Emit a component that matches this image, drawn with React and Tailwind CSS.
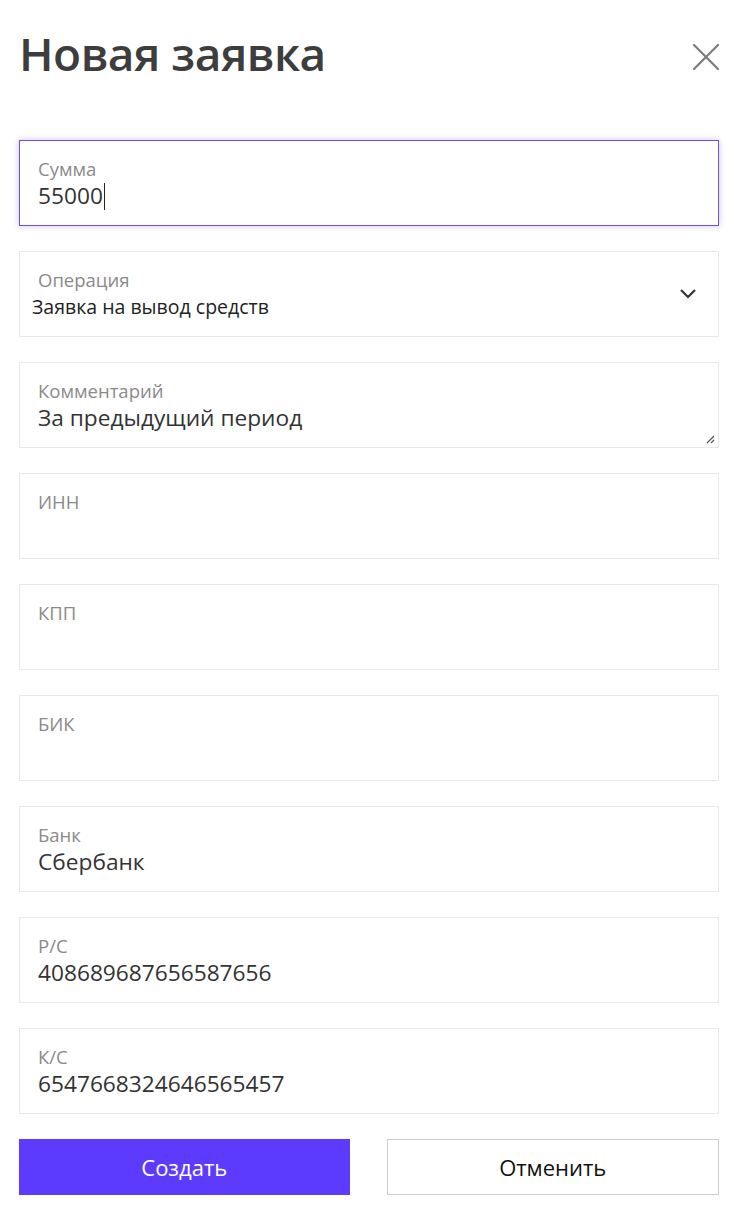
import React from 'react';

const fields = [
  { label: 'Комментарий', value: 'За предыдущий период', resize: true },
  { label: 'ИНН', value: '' },
  { label: 'КПП', value: '' },
  { label: 'БИК', value: '' },
  { label: 'Банк', value: 'Сбербанк' },
  { label: 'Р/С', value: '408689687656587656' },
  { label: 'К/С', value: '6547668324646565457' },
];

const Field = ({ label, value, resize }) => (
  <div className="relative h-[86px] w-full border border-[#e8e8e8] bg-white px-[18px] pt-[16px]">
    <div className="text-[18.5px] leading-[24px] text-[#8a8a8a]">{label}</div>
    <div className="text-[22.7px] leading-[30px] text-[#333333]">{value}</div>
    {resize && (
      <svg className="absolute bottom-[3px] right-[3px]" width="10" height="10" viewBox="0 0 10 10">
        <path d="M9 2 L2 9 M9 6 L6 9" stroke="#555" strokeWidth="1.2" />
      </svg>
    )}
  </div>
);

export default function App() {
  return (
    <div className="min-h-[1212px] w-[743px] bg-white pl-[19px] pr-[24px] pt-[22px]" style={{ fontFamily: '"Open Sans", "Noto Sans", sans-serif' }}>
      <div className="flex items-start justify-between">
        <h1 className="text-[46px] font-semibold leading-[62px] tracking-[-0.5px] text-[#3d3d3d]">Новая заявка</h1>
        <button className="mt-[22px]">
          <svg width="26" height="26" viewBox="0 0 26 26">
            <path d="M1 1 L25 25 M25 1 L1 25" stroke="#7b7b7b" strokeWidth="2.2" strokeLinecap="round" />
          </svg>
        </button>
      </div>

      <div className="mt-[56px] flex flex-col gap-[25px]">
        <div className="h-[86px] w-full border border-[#6b4cff] bg-white px-[18px] pt-[16px] shadow-[0_0_6px_rgba(107,76,255,0.35)]">
          <div className="text-[18.5px] leading-[24px] text-[#8a8a8a]">Сумма</div>
          <div className="flex items-center text-[22.7px] leading-[30px] text-[#333333]">
            55000<span className="ml-[1px] inline-block h-[27px] w-[1.5px] bg-[#222]" />
          </div>
        </div>

        <div className="flex h-[86px] w-full items-center justify-between border border-[#e8e8e8] bg-white pl-[12px] pr-[21px]">
          <div className="pt-[1px]">
            <div className="pl-[6px] text-[18.5px] leading-[24px] text-[#8a8a8a]">Операция</div>
            <div className="text-[19.5px] leading-[30px] text-[#222222]">Заявка на вывод средств</div>
          </div>
          <svg className="mb-[2px]" width="18" height="12" viewBox="0 0 18 12">
            <path d="M2 3 L9 10 L16 3" fill="none" stroke="#333" strokeWidth="2.2" />
          </svg>
        </div>

        {fields.map((f) => (
          <Field key={f.label} {...f} />
        ))}
      </div>

      <div className="mt-[25px] flex gap-[37px]">
        <button className="h-[56px] flex-1 bg-[#5c3bff] text-[22px] text-white">Создать</button>
        <button className="h-[56px] flex-1 border border-[#cccccc] bg-white text-[22px] text-[#111]">Отменить</button>
      </div>
    </div>
  );
}
